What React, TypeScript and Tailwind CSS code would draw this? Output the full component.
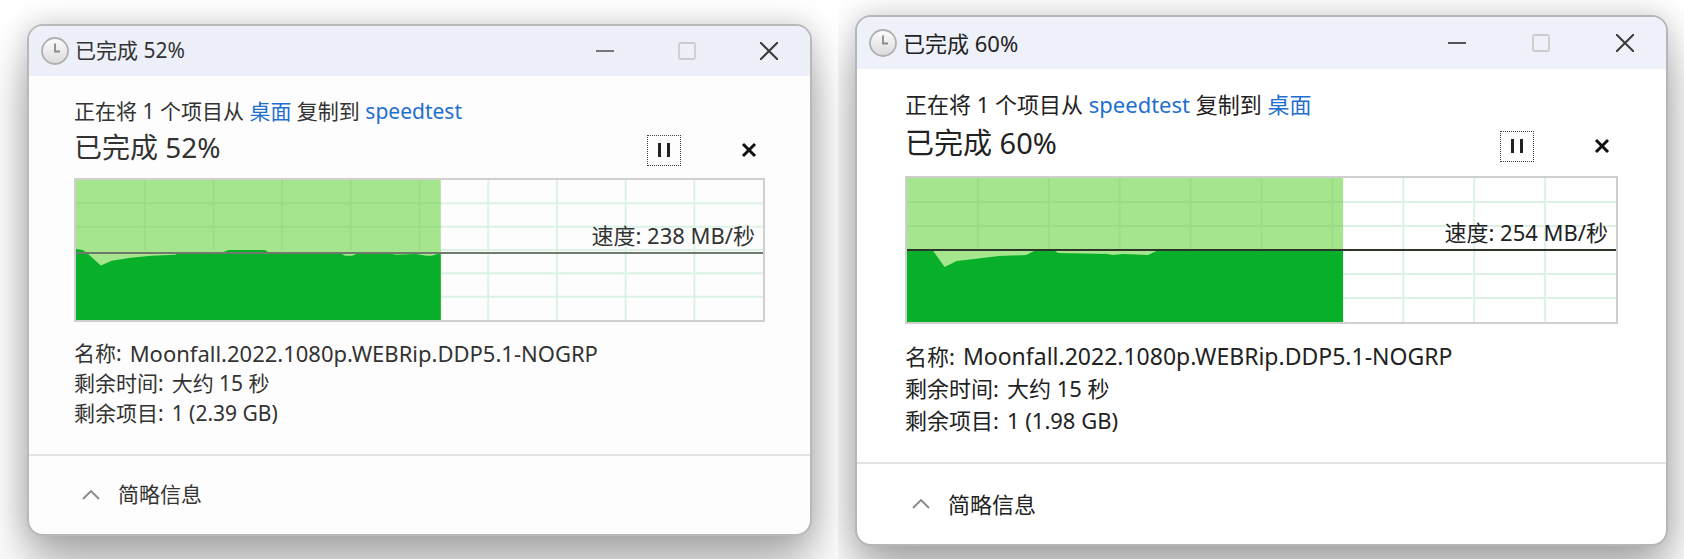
type CopyJob = {
  id: string
  percent: number
  from: string
  to: string
  speed: number
  name: string
  timeLeft: string
  itemsLeft: string
  // how much of the chart is filled, and the speed curve, in a 1000x144 box
  filled: number
  curve: string
}

const leftJob: CopyJob = {
  id: "write",
  percent: 52,
  from: "桌面",
  to: "speedtest",
  speed: 238,
  name: "Moonfall.2022.1080p.WEBRip.DDP5.1-NOGRP",
  timeLeft: "大约 15 秒",
  itemsLeft: "1 (2.39 GB)",
  filled: 531,
  curve: "M0 71 L10 72 L16 75 L36 88 L52 83 L80 80 L110 78 L145 77 L150 74 L215 74 L222 72 L275 72 L282 75 L384 75 L392 78 L402 78 L408 76 L460 76 L466 77 L495 76 L510 78 L518 78 L531 75 V144 H0 Z",
}

const rightJob: CopyJob = {
  id: "read",
  percent: 60,
  from: "speedtest",
  to: "桌面",
  speed: 254,
  name: "Moonfall.2022.1080p.WEBRip.DDP5.1-NOGRP",
  timeLeft: "大约 15 秒",
  itemsLeft: "1 (1.98 GB)",
  filled: 615,
  curve: "M0 72 L36 72 L53 89 L70 83 L95 81 L130 78 L168 77 L185 71 L205 71 L213 75 L283 76 L290 77 L305 76 L340 77 L352 73 L420 72 L590 72 L615 73 V144 H0 Z",
}

const columns = [100, 200, 300, 400, 500, 600, 700, 800, 900]
const rows = [24, 48, 72, 96, 120]

function ClockIcon() {
  return (
    <svg viewBox="0 0 28 28" className="size-7 shrink-0" aria-hidden="true">
      <defs>
        <linearGradient id="clockFace" x1="0" y1="0" x2="0" y2="1">
          <stop offset="0" stopColor="#fdfdfd" />
          <stop offset="1" stopColor="#dadada" />
        </linearGradient>
      </defs>
      <circle cx="14" cy="14" r="13" fill="url(#clockFace)" stroke="#b0b0b0" strokeWidth="1.8" />
      <path d="M14 6.5 V14.5 H19" fill="none" stroke="#888" strokeWidth="1.8" />
    </svg>
  )
}

function SpeedChart({ job }: { job: CopyJob }) {
  return (
    <svg viewBox="0 0 1000 144" preserveAspectRatio="none" className="block size-full" aria-hidden="true">
      <g stroke="#dcf2e4" strokeWidth="2">
        {columns.map((x) => <line key={x} x1={x} x2={x} y1="0" y2="144" vectorEffect="non-scaling-stroke" />)}
        {rows.map((y) => <line key={y} x1="0" x2="1000" y1={y} y2={y} vectorEffect="non-scaling-stroke" />)}
      </g>
      <rect width={job.filled} height="144" fill="#a5e58e" />
      <g stroke="#9bdd86" strokeWidth="2">
        {columns.filter((x) => x < job.filled).map((x) => <line key={x} x1={x} x2={x} y1="0" y2="72" vectorEffect="non-scaling-stroke" />)}
        {rows.slice(0, 2).map((y) => <line key={y} x1="0" x2={job.filled} y1={y} y2={y} vectorEffect="non-scaling-stroke" />)}
      </g>
      <path d={job.curve} fill="#08af28" />
    </svg>
  )
}

const sizes = {
  sm: {
    frame: "border-[#b9b9b9] bg-[#fdfdfd] text-[21px] text-[#333]",
    bar: "h-[50px] bg-[#eef0f9]",
    controls: "gap-16",
    minimize: "#777",
    body: "px-[45px] pt-[19px]",
    source: "leading-8",
    heading: "text-[28px] leading-10",
    chart: "mt-[11px] h-36",
    line: "h-[53%] border-[#6f7a6c]",
    details: "mt-4 leading-[30px]",
    name: "text-[22px]",
    footer: "h-20 pl-[53px]",
  },
  lg: {
    frame: "border-[#b4b7ba] bg-white text-[22px] text-[#222]",
    bar: "h-[52px] bg-[#eef1f9]",
    controls: "gap-[66px]",
    minimize: "#555",
    body: "px-12 pt-[18px]",
    source: "leading-[34px]",
    heading: "text-[29px] leading-[44px]",
    chart: "mt-[11px] h-[148px]",
    line: "h-[51%] border-[#2d352b]",
    details: "mt-4 leading-8",
    name: "text-[23px]",
    footer: "h-[82px] pl-[55px]",
  },
}

function CopyDialog({ job, size }: { job: CopyJob; size: "sm" | "lg" }) {
  const s = sizes[size]

  return (
    <section
      aria-labelledby={job.id}
      className={`overflow-hidden rounded-2xl border-2 shadow-[0_0_30px_rgba(0,0,0,0.2),0_36px_50px_rgba(0,0,0,0.28)] ${s.frame}`}
    >
      <header className={`flex items-center justify-between pr-8 pl-3 ${s.bar}`}>
        <div className="flex items-center gap-1.5">
          <ClockIcon />
          <span>已完成 {job.percent}%</span>
        </div>
        <div className={`flex items-center ${s.controls}`}>
          <button aria-label="最小化">
            <svg viewBox="0 0 18 18" className="size-[18px]" stroke={s.minimize} strokeWidth="2"><path d="M0 9 H18" /></svg>
          </button>
          <button aria-label="最大化" disabled>
            <svg viewBox="0 0 18 18" className="size-[18px]" fill="none" stroke="#ccc" strokeWidth="1.8"><rect x="1" y="1" width="16" height="16" rx="1.5" /></svg>
          </button>
          <button aria-label="关闭">
            <svg viewBox="0 0 18 18" className="size-[18px]" stroke="#3a3a3a" strokeWidth="2"><path d="M0 0 L18 18 M18 0 L0 18" /></svg>
          </button>
        </div>
      </header>

      <div className={s.body}>
        <p className={s.source}>
          正在将 1 个项目从 <a href="#from" className="text-[#1f6fd0]">{job.from}</a> 复制到 <a href="#to" className="text-[#1f6fd0]">{job.to}</a>
        </p>
        <div className="flex items-center justify-between">
          <h2 id={job.id} className={s.heading}>已完成 {job.percent}%</h2>
          <div className="flex items-center gap-[60px] pt-1.5 pr-2">
            <button aria-label="暂停" className="flex h-[31px] w-[34px] items-center justify-center border border-dotted border-[#444]">
              <svg viewBox="0 0 14 14" className="size-[14px]" stroke="#222" strokeWidth="3"><path d="M2.5 0 V14 M11.5 0 V14" /></svg>
            </button>
            <button aria-label="取消">
              <svg viewBox="0 0 16 16" className="size-4" stroke="#111" strokeWidth="3"><path d="M2 2 L14 14 M14 2 L2 14" /></svg>
            </button>
          </div>
        </div>

        <div className={`relative border-2 border-[#cfcfcf] ${s.chart}`}>
          <SpeedChart job={job} />
          <div className={`absolute inset-x-0 top-0 flex items-end justify-end border-b-2 pr-2 ${s.line}`}>
            <span className="text-[22px] leading-[34px]">速度: {job.speed} MB/秒</span>
          </div>
        </div>

        <dl className={s.details}>
          <div className="flex gap-2"><dt>名称:</dt><dd className={s.name}>{job.name}</dd></div>
          <div className="flex gap-2"><dt>剩余时间:</dt><dd>{job.timeLeft}</dd></div>
          <div className="flex gap-2"><dt>剩余项目:</dt><dd>{job.itemsLeft}</dd></div>
        </dl>
      </div>

      <footer className={`mt-[26px] flex items-center border-t-2 border-[#e4e4e4] ${s.footer}`}>
        <button className="flex items-center gap-[18px]">
          <svg viewBox="0 0 18 10" className="h-[10px] w-[18px]" fill="none" stroke="#888" strokeWidth="1.8"><path d="M1 9 L9 1 L17 9" /></svg>
          简略信息
        </button>
      </footer>
    </section>
  )
}

export default function App() {
  return (
    <main className="grid min-h-screen grid-cols-[838fr_846fr] bg-white font-['Noto_Sans','Noto_Sans_CJK_SC',sans-serif]">
      <div className="overflow-hidden pt-6 pr-[26px] pl-[27px]">
        <CopyDialog job={leftJob} size="sm" />
      </div>
      <div className="overflow-hidden pt-[15px] pr-4 pl-[17px]">
        <CopyDialog job={rightJob} size="lg" />
      </div>
    </main>
  )
}
